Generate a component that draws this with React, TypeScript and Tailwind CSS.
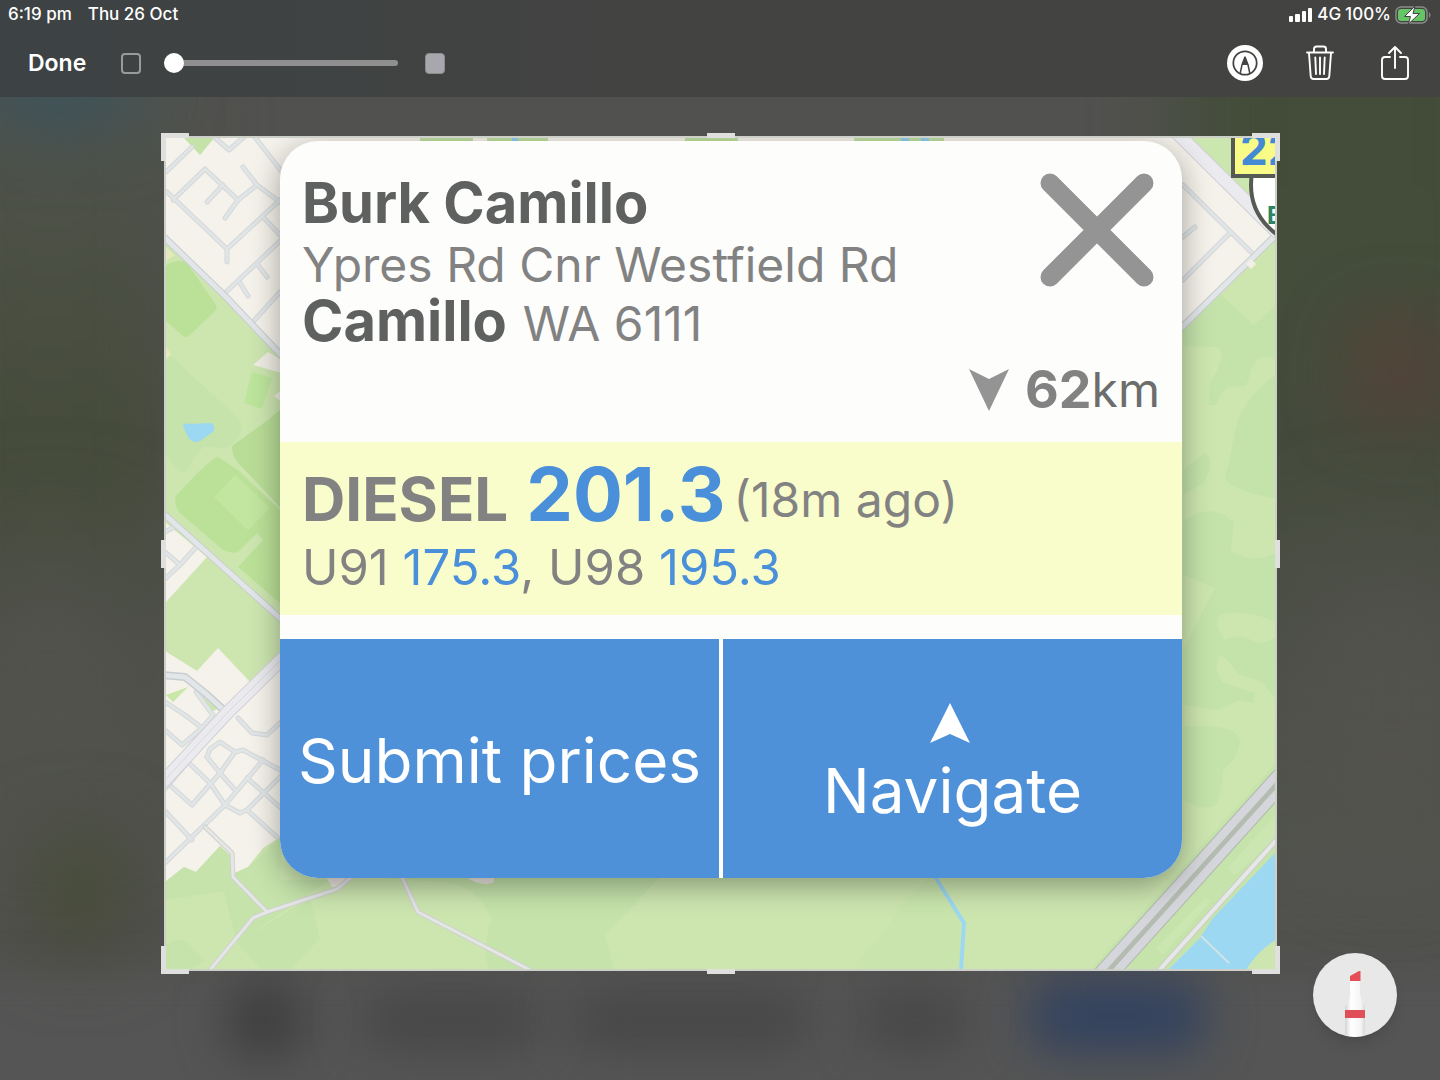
import React from "react";

const blocks = [
  "M167 192 227 249 227 262",
  "M227 249 280 200",
  "M173 200 205 169 238 200 225 218",
  "M223 185 207 202",
  "M238 200 257 185 280 202",
  "M257 185 243 167",
  "M166 172 192 147",
  "M213 136 229 150 245 136",
  "M254 136 282 172",
  "M225 293 280 241",
  "M240 283 248 296",
  "M258 265 267 277",
  "M263 217 280 235",
  "M252 323 280 292",
  "M165 552 180 565 198 545",
  "M165 579 180 565",
  "M165 532 178 525",
  "M165 702 185 715 202 728 213 715 196 692",
  "M165 730 182 745 202 728",
  "M238 718 252 733 267 735 282 721",
  "M188 762 210 783 225 805 240 813 247 810 282 775",
  "M172 787 192 805 220 773 235 752 243 750 282 771",
  "M207 757 210 749 220 742 235 752",
  "M207 757 220 773 235 790",
  "M165 789 188 762",
  "M225 805 263 760",
  "M247 778 282 809",
  "M247 810 277 837",
  "M165 811 192 840",
  "M165 863 225 805",
  "M1183 185 1252 253",
  "M1183 280 1230 233",
  "M1183 237 1195 227",
];

const trails = [
  "M205 827 232 853 233 877 267 912",
  "M210 970 253 918 267 912 337 889 354 875",
  "M401 875 418 912 530 970",
];

function MapDrawing() {
  return (
    <svg
      className="absolute inset-0 h-full w-full"
      viewBox="165 137 1111 833"
      preserveAspectRatio="none"
      aria-hidden="true"
    >
      <rect x="165" y="137" width="1111" height="833" fill="#cde6b0" />
      {/* residential ground */}
      <path d="M165 137H1180L1276 230 1180 330V190H280V354L165 238Z" fill="#f5f2eb" />
      <path d="M1190 137H1276V222L1190 140Z" fill="#cbe6ae" />
      <path d="M183 137H215L200 155Z" fill="#c5e3a9" />
      <path d="M166 523 207 557 166 602Z" fill="#f5f2eb" />
      <path
        d="M165 651 197 671 218 648 250 682 282 655V836L263 848 248 867 235 873 232 857 220 846 196 872 184 867 165 882Z"
        fill="#f5f2eb"
      />
      <path d="M166 695 188 687 173 702ZM195 690 217 709 211 712Z" fill="#c9e7a8" />
      {/* parks on the west side */}
      <path d="M165 266Q178 258 187 263L216 305Q218 309 214 312L190 335Q186 339 182 335L165 320Z" fill="#bbe198" />
      <path d="M165 246 174 255 165 262ZM165 346 171 354 165 360Z" fill="#e6eabb" />
      <path d="M165 362 171 356 240 420Q246 435 227 448L203 447 193 460 185 472Q180 476 165 453Z" fill="#c5e3ab" />
      <path d="M253 365 268 352 282 360V373Z" fill="#efede4" />
      <path d="M252 372 272 378 262 409 244 403Z" fill="#bde59b" />
      <path d="M274 396 282 390V402Z" fill="#efede4" />
      <path d="M268 420 232 446Q232 458 240 465L282 509V408Z" fill="#b9dd97" />
      <path
        d="M218 457Q210 458 176 496 173 505 180 513L223 550Q232 554 238 552L257 533 263 540 238 567 282 605V512L238 470Z"
        fill="#bbe198"
      />
      <path d="M235 475 270 508 248 530 214 497Z" fill="#c2e6a0" />
      <path d="M183 426Q184 422 190 424L211 423Q215 425 214 431L200 441Q195 444 189 439Z" fill="#9dd8f2" />
      {/* southern fields */}
      <path d="M165 882 184 867 196 872 220 846 232 857 235 873 248 867 282 836 280 880H330L237 943 224 891 165 900Z" fill="#c5e3ab" />
      <path d="M237 943 310 898 320 938 290 970H262Z" fill="#c5e3ab" />
      <path d="M165 945Q182 935 190 945L205 960 190 970H165Z" fill="#c5e3ab" />
      <path d="M370 877H660L605 935 614 970H490Q480 950 492 920 480 885 440 882Z" fill="#c5e3ab" />
      <path d="M860 960Q890 925 905 900L930 877 960 915 962 970H860Z" fill="#c9e5ad" />
      <path d="M322 870H352L340 888 332 887ZM452 870H494V882Q488 886 475 882Z" fill="#ece9e0" />
      {/* eastern woodland */}
      <path d="M1219 293 1254 325 1276 305V360Q1255 350 1250 375L1246 386 1228 387Q1222 390 1216 405L1209 405 1210 383Q1230 350 1215 347L1183 346V326Z" fill="#c4e3ab" />
      <path d="M1276 375Q1245 395 1235 430 1232 450 1225 478 1230 490 1276 499Z" fill="#c4e3ab" />
      <path d="M1183 470 1205 453Q1215 460 1204 483L1183 495Z" fill="#c4e3ab" />
      <path d="M1183 522Q1210 500 1234 522L1231 550Q1250 565 1276 553V622L1260 616Q1240 610 1222 614 1212 620 1224 640 1240 632 1255 642 1265 645 1276 636V700L1262 682 1238 674Q1230 660 1220 655 1212 665 1222 682L1255 693 1253 703 1240 700 1218 710 1183 705V650L1215 588 1183 575Z" fill="#c4e3ab" />
      <path d="M1183 727Q1240 722 1240 743 1238 758 1223 770 1222 790 1216 805 1200 812 1183 799Z" fill="#c4e3ab" />
      {/* strip seen over the card */}
      <path d="M420 137H473V141H420ZM487 137H548V141H487ZM685 137H738V141H685ZM854 137H944V141H854Z" fill="#bfe0a0" />
      <path d="M512 137H518V141H512ZM901 137H909V141H901ZM921 137H929V141H921Z" fill="#8fcfee" />
      {/* local streets */}
      <g fill="none" strokeLinejoin="round" strokeLinecap="round">
        {blocks.map((d) => (
          <path key={d} d={d} stroke="#d3d8da" strokeWidth="5" />
        ))}
        {blocks.map((d) => (
          <path key={d} d={d} stroke="#e2e5e6" strokeWidth="3" />
        ))}
        {trails.map((d) => (
          <path key={d} d={d} stroke="#cfd2cd" strokeWidth="5" />
        ))}
        {trails.map((d) => (
          <path key={d} d={d} stroke="#e5e6e6" strokeWidth="3" />
        ))}
        <path d="M163 236 225 296 282 356M163 513 282 620M1181 328 1276 235" stroke="#c8cdcf" strokeWidth="7" />
        <path d="M163 236 225 296 282 356M163 513 282 620M1181 328 1276 235" stroke="#e3e6e8" strokeWidth="5" />
        <path d="M163 675 185 677 205 693 227 713" stroke="#c8cdcf" strokeWidth="8" />
        <path d="M163 675 185 677 205 693 227 713" stroke="#e3e6e8" strokeWidth="5" />
        <path d="M163 782 227 713 284 657M1176 132 1276 231" stroke="#cfd1d6" strokeWidth="14" />
        <path d="M163 782 227 713 284 657M1176 132 1276 231" stroke="#ebebef" strokeWidth="12" />
        <path d="M163 782 227 713 284 657" stroke="#d6d8dc" strokeWidth="1" />
        <path d="M934 875 964 923 961 970" stroke="#9dd8f2" strokeWidth="4" />
      </g>
      <path d="M1251 259 1256 264 1251 269 1246 264Z" fill="#f2efe6" />
      {/* motorway, service road and river */}
      <path d="M1090 970 1276 763V861L1168 970Z" fill="#c5e3ab" />
      <path d="M1155 949 1206 897 1211 901 1163 955ZM1227 869 1276 814V838L1235 875Z" fill="#cbe6b0" />
      <path d="M1168 970 1200 938 1213 918 1276 852V940Q1258 950 1246 970Z" fill="#9dd8f2" />
      <path d="M1201 936 1229 963" stroke="#cfe3e6" strokeWidth="2" />
      <g fill="none">
        <path d="M1154 976 1280 836" stroke="#c9cdc8" strokeWidth="6" />
        <path d="M1154 976 1280 836" stroke="#e6e8e8" strokeWidth="4" />
        <path d="M1102 978 1286 774" stroke="#b4bbb0" strokeWidth="23" />
        <path d="M1097 974 1281 770M1107 982 1291 778" stroke="#d5d6dc" strokeWidth="8" />
      </g>
      {/* fuel price marker cut by the edge */}
      <circle cx="1311" cy="185" r="60" fill="#ffffff" stroke="#565a55" strokeWidth="4" />
      <rect x="1233" y="120" width="80" height="56" fill="#f8fc86" stroke="#565a55" strokeWidth="4" />
      <text x="1240" y="165" fontSize="44" fontWeight="700" fontFamily="Inter, sans-serif" fill="#4489d3">
        22
      </text>
      <text x="1267" y="224" fontSize="24" fontWeight="700" fontFamily="Inter, sans-serif" fill="#2b8567">
        B
      </text>
    </svg>
  );
}

function CropHandles() {
  const bar = "absolute bg-[#dfe0de]";
  return (
    <div className="pointer-events-none absolute -inset-1" aria-hidden="true">
      <span className="absolute inset-[3px] border-2 border-[#cdd0c8]" />
      <span className="absolute left-0 top-0 h-7 w-7 border-l-[5px] border-t-[5px] border-[#dfe0de]" />
      <span className="absolute right-0 top-0 h-7 w-7 border-r-[5px] border-t-[5px] border-[#dfe0de]" />
      <span className="absolute bottom-0 left-0 h-7 w-7 border-b-[5px] border-l-[5px] border-[#dfe0de]" />
      <span className="absolute bottom-0 right-0 h-7 w-7 border-b-[5px] border-r-[5px] border-[#dfe0de]" />
      <span className={`${bar} left-1/2 top-0 h-[5px] w-7 -translate-x-1/2`} />
      <span className={`${bar} bottom-0 left-1/2 h-[5px] w-7 -translate-x-1/2`} />
      <span className={`${bar} left-0 top-1/2 h-7 w-[5px] -translate-y-1/2`} />
      <span className={`${bar} right-0 top-1/2 h-7 w-[5px] -translate-y-1/2`} />
    </div>
  );
}

function StatusBar() {
  return (
    <div className="flex h-7 items-center justify-between px-2 pt-0.5 text-[17px] font-medium text-white">
      <div className="flex gap-4">
        <span>6:19 pm</span>
        <span>Thu 26 Oct</span>
      </div>
      <div className="flex items-center gap-1">
        <svg width="24" height="14" viewBox="0 0 24 14" fill="#fff" aria-label="Signal">
          <rect x="0" y="8" width="4" height="6" rx="1" />
          <rect x="6" y="6" width="5" height="8" rx="1" />
          <rect x="13" y="3" width="4" height="11" rx="1" />
          <rect x="19" y="0" width="4" height="14" rx="1" />
        </svg>
        <span>4G</span>
        <span>100%</span>
        <svg width="37" height="18" viewBox="0 0 37 18" aria-label="Battery charging">
          <rect x="1" y="1" width="31" height="16" rx="5" fill="none" stroke="#8b8c8a" strokeWidth="1.5" />
          <rect x="3" y="3" width="27" height="12" rx="3" fill="#65c466" />
          <path d="M34 6q3 3 0 6z" fill="#8b8c8a" />
          <path d="M20 0 9.500 10.500h6L13.500 18 24.500 7.500h-6.500z" fill="#fff" stroke="#434442" strokeWidth="1" />
        </svg>
      </div>
    </div>
  );
}

function Toolbar() {
  return (
    <div className="flex items-center justify-between pb-4 pl-7 pr-[26px] pt-[17px]">
      <div className="flex items-center">
        <button className="text-[23px] font-semibold leading-9 text-white">Done</button>
        <span className="ml-[35px] h-[21px] w-5 rounded border-2 border-[#9a9a9c]" />
        <input
          type="range"
          min="0"
          max="100"
          defaultValue="0"
          aria-label="Opacity"
          className="ml-[23px] h-5 w-[234px] appearance-none bg-transparent [&::-webkit-slider-runnable-track]:h-1.5 [&::-webkit-slider-runnable-track]:rounded-full [&::-webkit-slider-runnable-track]:bg-[#8f8f8f] [&::-webkit-slider-thumb]:-mt-[7px] [&::-webkit-slider-thumb]:h-5 [&::-webkit-slider-thumb]:w-5 [&::-webkit-slider-thumb]:appearance-none [&::-webkit-slider-thumb]:rounded-full [&::-webkit-slider-thumb]:bg-white"
        />
        <span className="ml-[27px] h-[21px] w-5 rounded border border-[#8e8d90] bg-[#a9a7ae]" />
      </div>
      <div className="flex items-center gap-10">
        <button aria-label="Markup">
          <svg className="block" width="38" height="36" viewBox="0 0 37 37">
            <circle cx="18.5" cy="18.5" r="18.5" fill="#fff" />
            <circle cx="18.5" cy="18.5" r="12" fill="none" stroke="#434442" strokeWidth="1.8" />
            <path d="M13.5 29.5 15.5 20 18.5 12.5 21.5 20 23.5 29.5" fill="none" stroke="#434442" strokeWidth="1.6" strokeLinejoin="round" />
            <path d="M15.3 20.5 18.5 12 21.7 20.5Z" fill="#434442" />
          </svg>
        </button>
        <button aria-label="Delete">
          <svg className="block" width="32" height="36" viewBox="0 0 32 36" fill="none" stroke="#fff" strokeWidth="1.9" strokeLinecap="round" strokeLinejoin="round">
            <path d="M3 7.500h26M10 7V4q0-2.500 2.500-2.500h7Q22 1.500 22 4v3M5 8l1.700 23q.2 3 3 3h12.600q2.800 0 3-3L27 8" />
            <path d="M11.300 12.500 12 29M16 12.500V29M20.700 12.500 20 29" />
          </svg>
        </button>
        <button aria-label="Share">
          <svg className="block" width="38" height="36" viewBox="0 0 38 36" fill="none" stroke="#fff" strokeWidth="1.9" strokeLinecap="round" strokeLinejoin="round">
            <path d="M14 12H9q-3 0-3 3v16q0 3 3 3h20q3 0 3-3V15q0-3-3-3h-5M19 23V2M13 8l6-6 6 6" />
          </svg>
        </button>
      </div>
    </div>
  );
}

function StationCard() {
  return (
    <article className="relative ml-[115px] mr-[94px] overflow-hidden rounded-[38px] bg-[#fdfdfc] text-5xl text-[#828282] shadow-[0_8px_30px_rgba(0,0,0,0.35)]">
      <div className="px-[22px] pb-[22px] pt-[30px]">
        <div className="flex items-start justify-between">
          <div>
            <h1 className="text-[56px] font-bold leading-[64px] text-[#5e615f]">Burk Camillo</h1>
            <p className="leading-[60px]">Ypres Rd Cnr Westfield Rd</p>
            <p className="text-[56px] leading-[52px]">
              <strong className="text-[#5e615f]">Camillo</strong>{" "}
              <span className="text-5xl leading-none">WA 6111</span>
            </p>
          </div>
          <button aria-label="Close" className="mr-1.5 mt-0.5">
            <svg width="114" height="114" viewBox="0 0 114 114" stroke="#949494" strokeWidth="19" strokeLinecap="round">
              <path d="M10 10 104 104M104 10 10 104" />
            </svg>
          </button>
        </div>
        <div className="mt-3 flex items-center justify-end leading-[60px]">
          <svg className="mr-4" width="40" height="42" viewBox="0 0 40 42" fill="#949494" aria-hidden="true">
            <path d="M0 0 20 10 40 0 20 42Z" />
          </svg>
          <strong className="text-[52px] leading-[60px]">62</strong>
          <span className="text-[#6b6e6c]">km</span>
        </div>
      </div>
      <div className="bg-[#f9fdcb] px-[22px] pb-[13px] pt-3">
        <p className="text-[74px] leading-[80px]">
          <strong className="mr-[18px] text-[60px] leading-none">DIESEL</strong>
          <strong className="text-[#4a8fd9]">201.3</strong>
          <span className="ml-2 align-[4px] text-5xl leading-none">(18m ago)</span>
        </p>
        <p className="text-[49px] leading-[68px]">
          U91 <span className="text-[#4a8fd9]">175.3</span>, U98 <span className="text-[#4a8fd9]">195.3</span>
        </p>
      </div>
      <div className="mt-6 flex h-[239px] divide-x-4 divide-white bg-[#4e91d8] text-white">
        <button className="w-[443px] shrink-0 pt-1 text-[62px] leading-[64px]">Submit prices</button>
        <button className="flex flex-1 flex-col items-center justify-center gap-4 pt-2 text-[62px] leading-[64px]">
          <svg className="mr-1.5" width="40" height="40" viewBox="0 0 40 40" fill="#fff" aria-hidden="true">
            <path d="M20 0 40 40 20 31 0 40Z" />
          </svg>
          Navigate
        </button>
      </div>
    </article>
  );
}

function Backdrop() {
  return (
    <div className="pointer-events-none absolute inset-0 overflow-hidden" aria-hidden="true">
      <div className="absolute -left-20 top-0 h-[900px] w-[260px] bg-linear-to-b from-[#545652] via-[#454b3a] to-[#535450] blur-2xl" />
      <div className="absolute -right-20 top-0 h-[900px] w-[340px] bg-linear-to-b from-[#434d38] via-[#454b3c] to-[#535450] blur-2xl" />
      <div className="absolute -inset-x-10 -bottom-10 h-[150px] bg-[#555555] blur-lg" />
      <div className="absolute -left-5 top-14 h-16 w-40 rounded-full bg-[#35525e] blur-2xl" />
      <div className="absolute -left-10 top-[560px] h-60 w-44 rounded-full bg-[#53534f] blur-3xl" />
      <div className="absolute -right-10 top-[560px] h-72 w-44 rounded-full bg-[#54534f] blur-3xl" />
      <div className="absolute right-2 top-[330px] h-20 w-16 rounded-full bg-[#663838] blur-2xl" />
      <div className="absolute bottom-[130px] left-10 h-28 w-20 rounded-full bg-[#43492f] blur-2xl" />
      <div className="absolute bottom-5 left-[225px] h-20 w-20 rounded-full bg-[#3e3e3e] blur-xl" />
      <div className="absolute bottom-8 left-[360px] h-14 w-[180px] rounded-full bg-[#464646] blur-xl" />
      <div className="absolute bottom-8 left-[570px] h-14 w-[240px] rounded-full bg-[#464646] blur-xl" />
      <div className="absolute bottom-8 left-[860px] h-14 w-[110px] rounded-full bg-[#464646] blur-xl" />
      <div className="absolute bottom-7 right-[235px] h-[72px] w-[175px] rounded-3xl bg-[#32425f] blur-xl" />
    </div>
  );
}

export default function App() {
  return (
    <div className="relative min-h-screen overflow-hidden bg-[#51514f] font-['Inter',sans-serif]">
      <Backdrop />
      <header className="relative bg-[#434442] bg-linear-to-r from-[#3d4244] via-[#434341] to-[#434441]">
        <StatusBar />
        <Toolbar />
      </header>
      <main className="relative pb-[110px] pl-[165px] pr-[164px] pt-10">
        <section className="relative" aria-label="Crop area">
          <div className="relative overflow-hidden pb-[92px] pt-1">
            <MapDrawing />
            <StationCard />
          </div>
          <CropHandles />
        </section>
      </main>
      <button
        aria-label="Marker"
        className="absolute bottom-[43px] right-[43px] overflow-hidden rounded-full bg-[#e8e8e8] shadow-lg"
      >
        <svg width="84" height="84" viewBox="0 0 84 84">
          <defs>
            <linearGradient id="pen">
              <stop offset="0" stopColor="#d4d4d4" />
              <stop offset=".3" stopColor="#ffffff" />
              <stop offset=".8" stopColor="#f4f4f4" />
              <stop offset="1" stopColor="#d8d8d8" />
            </linearGradient>
          </defs>
          <path d="M37 28H47V40Q48 48 52 53V84H32V53Q37 48 37 40Z" fill="url(#pen)" />
          <path d="M37 28V23L46 18H47.500V28Z" fill="#e54e56" />
          <path d="M32 57H52V65H32Z" fill="#e04f57" />
        </svg>
      </button>
    </div>
  );
}
